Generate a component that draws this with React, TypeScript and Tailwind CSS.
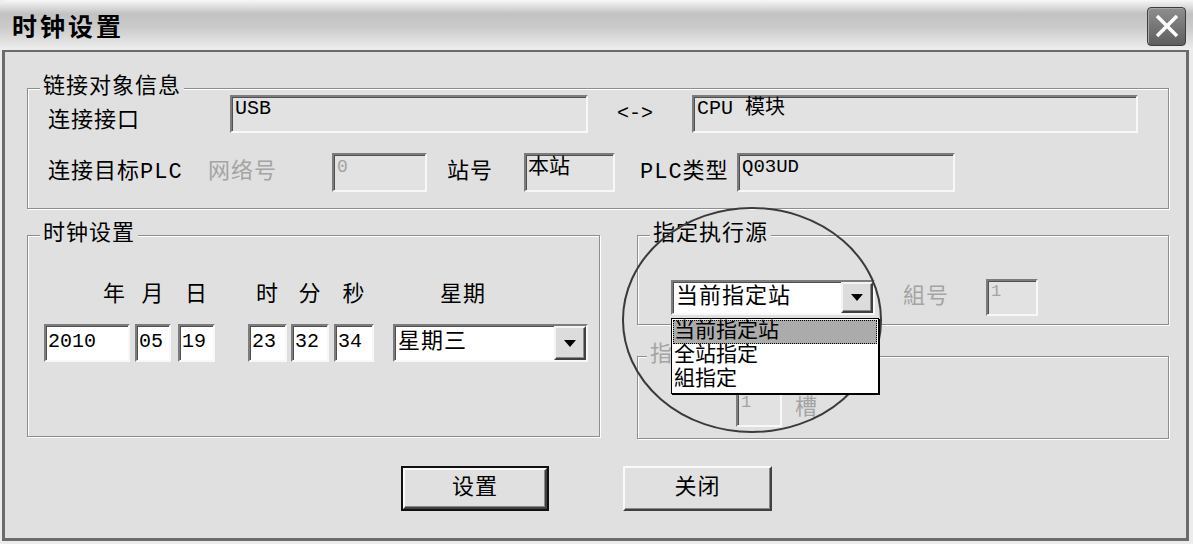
import React from "react";

const FONT = "font-['Liberation_Mono','Noto_Sans_CJK_SC',monospace]";
const LABEL = "text-[22px] leading-[26px] tracking-[1px] whitespace-nowrap";
const GRAY = "text-[#a4a4a4]";

function Sunken({ className = "", children }: { className?: string; children?: React.ReactNode }) {
  return (
    <div
      className={
        "shrink-0 border-2 border-t-[#7c7c7c] border-l-[#7c7c7c] border-b-[#f8f8f8] border-r-[#f8f8f8] shadow-[inset_1px_1px_0_#505050] " +
        className
      }
    >
      {children}
    </div>
  );
}

function Group({
  title,
  className = "",
  titleClass = "ml-[12px]",
  children,
}: {
  title: string;
  className?: string;
  titleClass?: string;
  children?: React.ReactNode;
}) {
  return (
    <div className={"border border-[#8e8e8e] shadow-[inset_1px_1px_0_#ffffff,1px_1px_0_#ffffff] " + className}>
      <div className={"-mt-[14px] w-fit px-[3px] bg-[#e0e0e0] h-[26px] " + LABEL + " " + titleClass}>{title}</div>
      {children}
    </div>
  );
}

function DropArrow() {
  return (
    <div className="w-[32px] h-full shrink-0 flex items-center justify-center bg-[#dcdcdc] border-2 border-t-[#f4f4f4] border-l-[#f4f4f4] border-b-[#404040] border-r-[#404040] shadow-[inset_-1px_-1px_0_#8a8a8a]">
      <svg width="12" height="7" viewBox="0 0 12 7">
        <polygon points="0,0 12,0 6,7" fill="#000" />
      </svg>
    </div>
  );
}

function Button({ children, def }: { children: React.ReactNode; def?: boolean }) {
  const inner = (
    <div className="w-full h-full flex items-center justify-center bg-[#e0e0e0] border-2 border-t-[#fafafa] border-l-[#fafafa] border-b-[#404040] border-r-[#404040] shadow-[inset_-1px_-1px_0_#8a8a8a] text-[22px] tracking-[1px]">
      {children}
    </div>
  );
  if (def) {
    return <div className="w-[148px] h-[45px] border-2 border-[#111]">{inner}</div>;
  }
  return <div className="w-[149px] h-[45px]">{inner}</div>;
}

export default function App() {
  return (
    <div className={"relative w-[1193px] h-[544px] overflow-hidden bg-[#ececec] flex flex-col text-black " + FONT}>
      {/* Title bar */}
      <div className="h-[50px] shrink-0 flex items-center justify-between pl-[12px] pr-[7px] rounded-tl-[6px] bg-[linear-gradient(to_bottom,#f7f7f7_0%,#c2c2c2_28%,#cbcbcb_55%,#eeeeee_100%)]">
        <span className="text-[25px] leading-none font-bold tracking-[3px] font-['Noto_Sans_CJK_SC',sans-serif]">时钟设置</span>
        <div className="w-[39px] h-[39px] mt-[2px] rounded-[4px] border border-[#3e3e3e] bg-[linear-gradient(to_bottom,#8e8e8e,#5e5e5e)] flex items-center justify-center shadow-[inset_1px_1px_0_#a8a8a8]">
          <svg width="26" height="26" viewBox="0 0 26 26">
            <line x1="3" y1="3" x2="23" y2="23" stroke="#ffffff" strokeWidth="3.5" />
            <line x1="23" y1="3" x2="3" y2="23" stroke="#ffffff" strokeWidth="3.5" />
          </svg>
        </div>
      </div>

      {/* Body */}
      <div className="flex-1 ml-[2px] mr-[4px] mb-[3px] border-t-2 border-x-[3px] border-b-[3px] border-[#6b6b6b] bg-[#e0e0e0] pl-[22px] pr-[17px] flex flex-col">
        {/* Link info group */}
        <Group title="链接对象信息" className="mt-[36px] pb-[16px]">
          <div className="-mt-[6px] flex items-start pl-[20px]">
            <span className={"w-[182px] shrink-0 pt-[14px] " + LABEL}>连接接口</span>
            <Sunken className="w-[358px] h-[38px] bg-[#e2e2e2] text-[20px] leading-[24px] pl-[3px]">USB</Sunken>
            <span className="w-[104px] shrink-0 pl-[29px] pt-[7px] text-[20px] leading-[24px]">&lt;-&gt;</span>
            <Sunken className="w-[446px] h-[38px] bg-[#e2e2e2] text-[20px] leading-[24px] pl-[3px]">CPU 模块</Sunken>
          </div>
          <div className="mt-[18px] flex items-center pl-[20px]">
            <span className={"w-[160px] shrink-0 " + LABEL}>连接目标PLC</span>
            <span className={"w-[124px] shrink-0 " + LABEL + " " + GRAY}>网络号</span>
            <Sunken className={"w-[95px] h-[39px] bg-[#e2e2e2] text-[18px] leading-[24px] pl-[3px] " + GRAY}>0</Sunken>
            <span className={"ml-[20px] w-[77px] shrink-0 " + LABEL}>站号</span>
            <Sunken className="w-[91px] h-[39px] bg-[#e2e2e2] text-[21px] leading-[26px] pl-[2px]">本站</Sunken>
            <span className={"ml-[25px] w-[97px] shrink-0 " + LABEL}>PLC类型</span>
            <Sunken className="w-[218px] h-[39px] bg-[#e2e2e2] text-[19px] leading-[24px] pl-[3px]">Q03UD</Sunken>
          </div>
        </Group>

        {/* Two columns */}
        <div className="mt-[26px] flex gap-[37px]">
          <Group title="时钟设置" className="w-[573px] h-[202px]">
            <div className="mt-[35px] pl-[16px] flex">
              <div className="w-[86px] flex flex-col">
                <span className={"text-right pr-[4px] " + LABEL}>年</span>
                <Sunken className="mt-[15px] w-[86px] h-[38px] bg-white text-[20px] leading-[32px] pl-[2px]">2010</Sunken>
              </div>
              <div className="ml-[5px] w-[36px] flex flex-col">
                <span className={"text-center " + LABEL}>月</span>
                <Sunken className="mt-[15px] w-[36px] h-[38px] bg-white text-[20px] leading-[32px] pl-[2px]">05</Sunken>
              </div>
              <div className="ml-[7px] w-[37px] flex flex-col">
                <span className={"text-center " + LABEL}>日</span>
                <Sunken className="mt-[15px] w-[37px] h-[38px] bg-white text-[20px] leading-[32px] pl-[2px]">19</Sunken>
              </div>
              <div className="ml-[33px] w-[39px] flex flex-col">
                <span className={"text-center " + LABEL}>时</span>
                <Sunken className="mt-[15px] w-[39px] h-[38px] bg-white text-[20px] leading-[32px] pl-[2px]">23</Sunken>
              </div>
              <div className="ml-[4px] w-[38px] flex flex-col">
                <span className={"text-center " + LABEL}>分</span>
                <Sunken className="mt-[15px] w-[38px] h-[38px] bg-white text-[20px] leading-[32px] pl-[2px]">32</Sunken>
              </div>
              <div className="ml-[5px] w-[40px] flex flex-col">
                <span className={"text-center " + LABEL}>秒</span>
                <Sunken className="mt-[15px] w-[40px] h-[38px] bg-white text-[20px] leading-[32px] pl-[2px]">34</Sunken>
              </div>
              <div className="ml-[19px] w-[195px] flex flex-col">
                <span className={"pl-[47px] " + LABEL}>星期</span>
                <Sunken className="mt-[15px] w-[195px] h-[38px] bg-white flex items-stretch">
                  <span className={"flex-1 pl-[3px] self-center " + LABEL}>星期三</span>
                  <DropArrow />
                </Sunken>
              </div>
            </div>
          </Group>

          <div className="w-[532px] flex flex-col">
            <Group title="指定执行源" className="h-[90px]">
              <div className="mt-[31px] pl-[33px] flex items-center">
                <div className="relative">
                  <Sunken className="w-[204px] h-[35px] bg-white flex items-stretch">
                    <span className={"flex-1 pl-[3px] self-center " + LABEL}>当前指定站</span>
                    <DropArrow />
                  </Sunken>
                  <div className="absolute z-10 left-0 top-[38px] w-[208px] bg-white border border-black shadow-[1px_1px_0_#000] py-[1px]">
                    <div className="mx-[1px] bg-[#ababab] border border-dotted border-black h-[24px] leading-[22px] text-[21px] whitespace-nowrap">当前指定站</div>
                    <div className="px-[2px] h-[24px] leading-[24px] text-[21px] whitespace-nowrap">全站指定</div>
                    <div className="px-[2px] h-[24px] leading-[24px] text-[21px] whitespace-nowrap">組指定</div>
                  </div>
                </div>
                <span className={"ml-[28px] w-[83px] shrink-0 " + LABEL + " " + GRAY}>組号</span>
                <Sunken className={"w-[52px] h-[37px] bg-[#e2e2e2] text-[17px] leading-[22px] pl-[3px] " + GRAY}>1</Sunken>
              </div>
            </Group>
            <Group title="指" titleClass={"ml-[9px] " + GRAY} className="mt-[31px] h-[83px]">
              <div className="mt-[21px] pl-[98px] flex items-center">
                <Sunken className={"w-[46px] h-[37px] bg-[#e2e2e2] text-[17px] leading-[22px] pl-[3px] " + GRAY}>1</Sunken>
                <span className={"ml-[13px] " + LABEL + " " + GRAY}>槽</span>
              </div>
            </Group>
          </div>
        </div>

        {/* Buttons */}
        <div className="mt-[27px] ml-[374px] flex gap-[74px]">
          <Button def>设置</Button>
          <Button>关闭</Button>
        </div>
      </div>

      {/* Annotation ellipse */}
      <svg
        className="absolute left-[621px] top-[205px] pointer-events-none"
        width="262"
        height="230"
        viewBox="0 0 262 230"
      >
        <ellipse cx="131" cy="115" rx="129" ry="112" fill="none" stroke="#3a3a3a" strokeWidth="2" />
      </svg>
    </div>
  );
}
